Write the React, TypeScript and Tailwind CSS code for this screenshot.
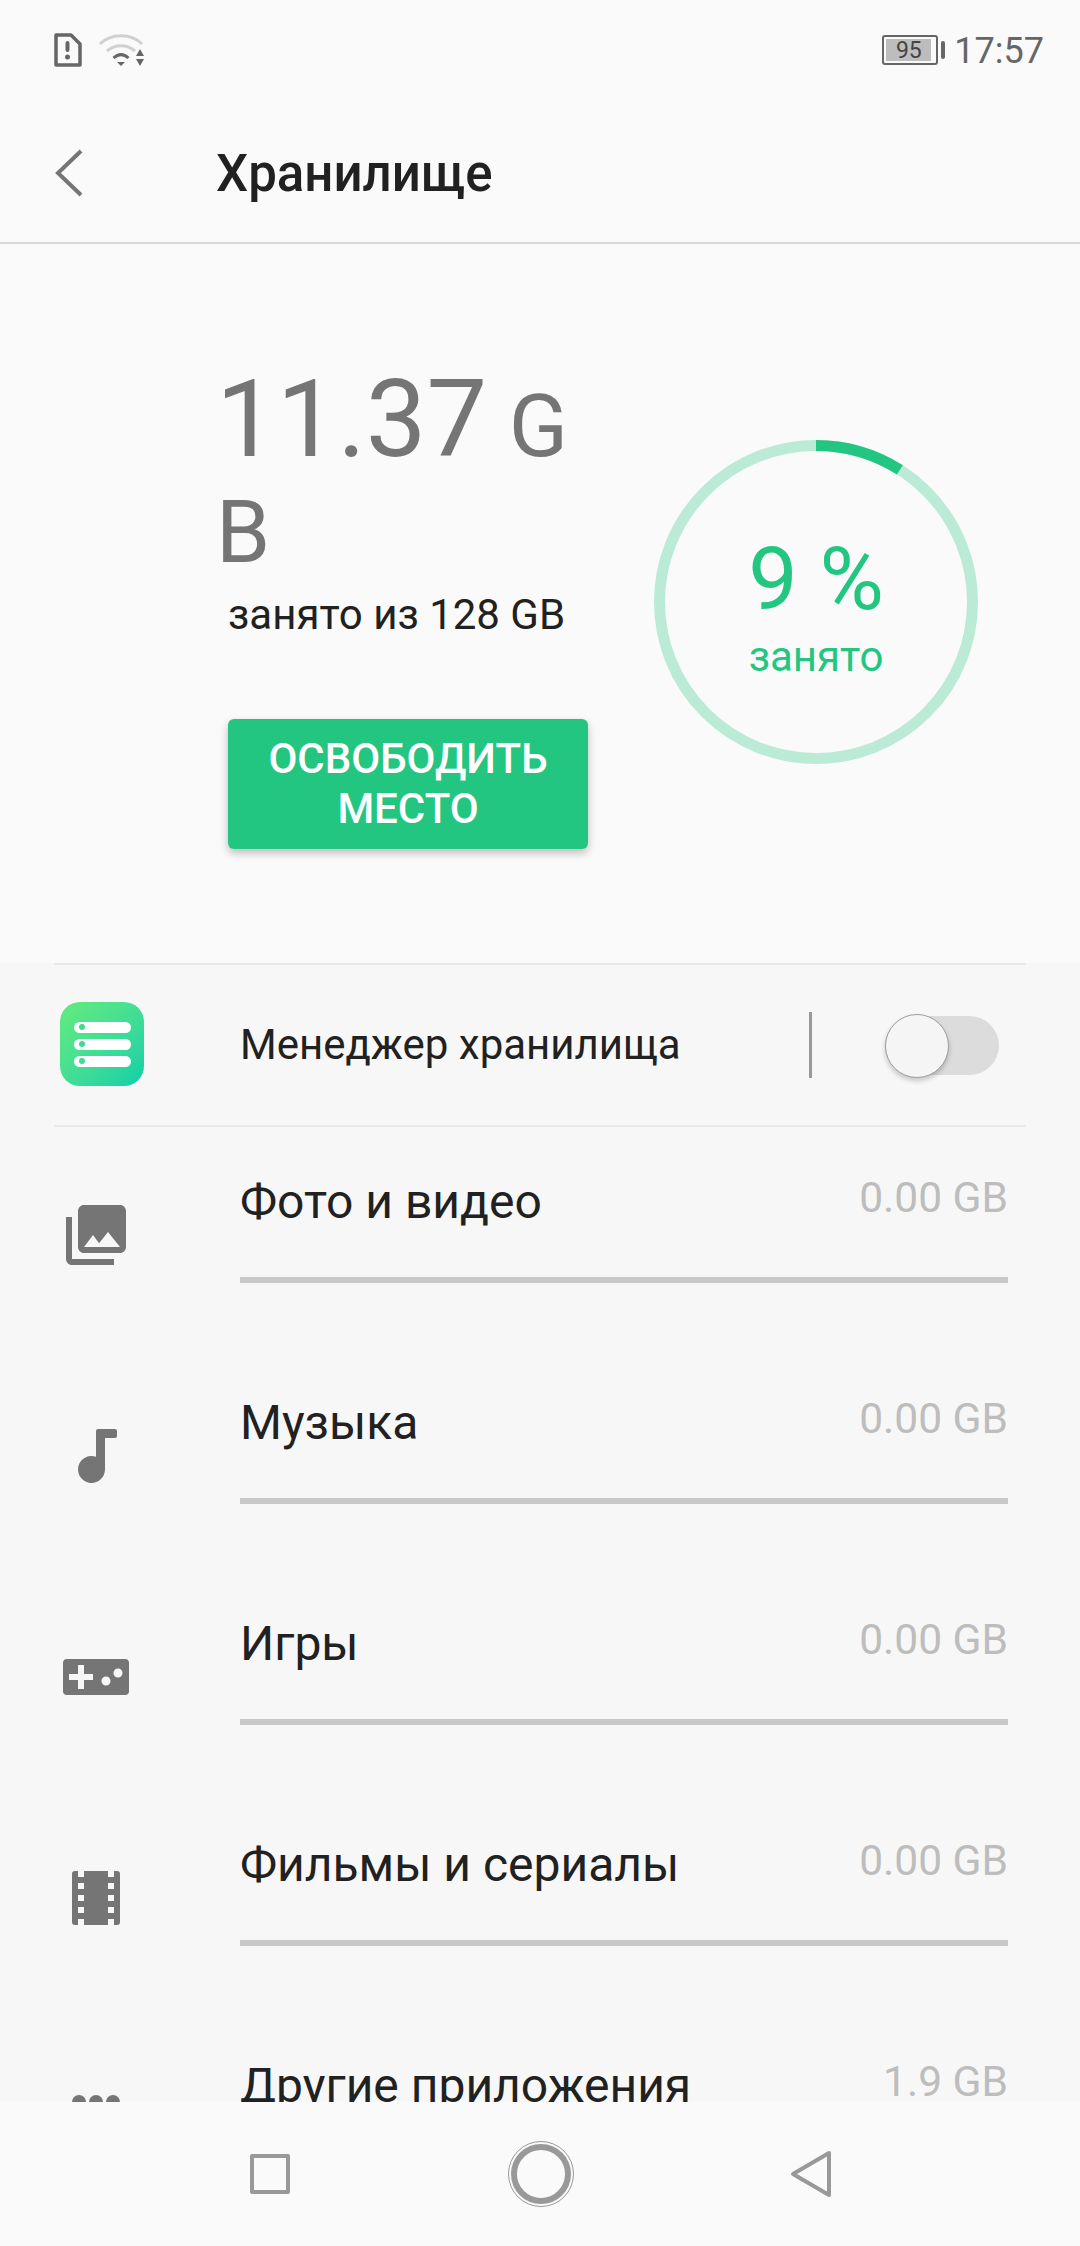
const rows = [
  { label: 'Фото и видео', size: '0.00 GB', icon: 'photo' },
  { label: 'Музыка', size: '0.00 GB', icon: 'music' },
  { label: 'Игры', size: '0.00 GB', icon: 'game' },
  { label: 'Фильмы и сериалы', size: '0.00 GB', icon: 'film' },
  { label: 'Другие приложения', size: '1.9 GB', icon: 'more' },
]

function RowIcon({ name }: { name: string }) {
  if (name === 'photo') {
    return (
      <svg viewBox="0 0 24 24" className="w-[72px] h-[72px]" fill="#757575">
        <path d="M22 16V4c0-1.1-.9-2-2-2H8c-1.1 0-2 .9-2 2v12c0 1.1.9 2 2 2h12c1.1 0 2-.9 2-2zm-11-4l2.03 2.71L16 11l4 5H8l3-4zM2 6v14c0 1.1.9 2 2 2h14v-2H4V6H2z" />
      </svg>
    )
  }
  if (name === 'music') {
    return (
      <svg viewBox="0 0 72 72" className="w-[72px] h-[72px]" fill="#757575">
        <path d="M36 11a2 2 0 0 1 2-2h17a2 2 0 0 1 2 2v5a2 2 0 0 1-2 2H45v31.500a13.500 13.500 0 1 1-9-12.730V11z" />
      </svg>
    )
  }
  if (name === 'game') {
    return (
      <svg viewBox="0 0 72 72" className="w-[72px] h-[72px]" fill="#757575">
        <path
          fillRule="evenodd"
          d="M7 18h58a4 4 0 0 1 4 4v28a4 4 0 0 1-4 4H7a4 4 0 0 1-4-4V22a4 4 0 0 1 4-4zm11 6v9H9v6h9v9h6v-9h9v-6h-9v-9h-6zm28 11.500a4.500 4.500 0 1 0 0 9 4.500 4.500 0 0 0 0-9zm12-8a4.500 4.500 0 1 0 0 9 4.500 4.500 0 0 0 0-9z"
        />
      </svg>
    )
  }
  if (name === 'film') {
    return (
      <svg viewBox="0 0 72 72" className="w-[72px] h-[72px]" fill="#757575">
        <path
          fillRule="evenodd"
          d="M15 9h3v6h6V9h24v6h6V9h3a3 3 0 0 1 3 3v48a3 3 0 0 1-3 3h-3v-6h-6v6H24v-6h-6v6h-3a3 3 0 0 1-3-3V12a3 3 0 0 1 3-3zm3 12v6h6v-6h-6zm0 12v6h6v-6h-6zm0 12v6h6v-6h-6zm30-24v6h6v-6h-6zm0 12v6h6v-6h-6zm0 12v6h6v-6h-6z"
        />
      </svg>
    )
  }
  return (
    <svg viewBox="0 0 72 72" className="w-[72px] h-[72px]" fill="#757575">
      <circle cx="19" cy="19" r="7" />
      <circle cx="36" cy="19" r="7" />
      <circle cx="53" cy="19" r="7" />
    </svg>
  )
}

function StatusBar() {
  return (
    <div className="h-[72px] shrink-0 flex items-center justify-between pl-[54px] pr-[36px] pt-[28px] text-[#666666]">
      <div className="flex items-center gap-[16px]">
        <svg viewBox="0 0 28 34" className="w-[28px] h-[34px]">
          <path d="M2 2h15l9 9v21H2z" fill="none" stroke="#666666" strokeWidth="3.500" strokeLinejoin="round" />
          <rect x="11.500" y="8" width="4" height="11" rx="2" fill="#666666" />
          <circle cx="13.500" cy="24" r="2.500" fill="#666666" />
        </svg>
        <svg viewBox="0 0 48 36" className="w-[48px] h-[36px]">
          <path d="M2 12C13 1 33 1 44 12" fill="none" stroke="#d0d0d0" strokeWidth="3" />
          <path d="M9 19c8-7 20-7 28 0" fill="none" stroke="#d0d0d0" strokeWidth="3" />
          <path d="M15.500 26c5-4.500 10-4.500 15 0" fill="none" stroke="#666666" strokeWidth="3" />
          <path d="M19 30h8l-4 4z" fill="#666666" />
          <path d="M42 17l4 7h-8zM38 27h8l-4 7z" fill="#666666" />
        </svg>
      </div>
      <div className="flex items-center gap-[9px]">
        <div className="flex items-center gap-[3px]">
          <div className="w-[56px] h-[30px] rounded-[3px] border-2 border-[#666666] p-[2px]">
            <div className="h-full w-[45px] bg-[#bdbdbd] flex items-center justify-center text-[23px] leading-none font-['Roboto',sans-serif] text-[#444444]">
              95
            </div>
          </div>
          <div className="w-[4px] h-[18px] rounded-[2px] bg-[#666666]" />
        </div>
        <span className="text-[36px] leading-none font-['Roboto',sans-serif] pt-[2px]">17:57</span>
      </div>
    </div>
  )
}

function Ring() {
  const r = 156.5
  const c = 2 * Math.PI * r
  return (
    <div className="relative w-[324px] h-[324px]">
      <svg viewBox="0 0 324 324" className="w-[324px] h-[324px]">
        <circle cx="162" cy="162" r={r} fill="none" stroke="#bbebd7" strokeWidth="11" />
        <circle
          cx="162"
          cy="162"
          r={r}
          fill="none"
          stroke="#23c680"
          strokeWidth="11"
          strokeDasharray={`${c * 0.09} ${c}`}
          transform="rotate(-90 162 162)"
        />
      </svg>
      <div className="absolute inset-0 flex flex-col items-center justify-center pt-[6px] text-[#23c680]">
        <span className="text-[88px] leading-[100px]">9 %</span>
        <span className="text-[42px] leading-[48px] mt-[4px]">занято</span>
      </div>
    </div>
  )
}

export default function App() {
  return (
    <div className="w-[1080px] h-[2246px] bg-[#fafafa] flex flex-col overflow-hidden font-['Roboto',sans-serif] text-[#212121]">
      <StatusBar />
      <div className="h-[172px] shrink-0 flex items-center pt-[32px] border-b-2 border-[#d8d8d8]">
        <svg viewBox="0 0 30 50" className="ml-[54px] w-[30px] h-[50px]">
          <path d="M27 3L4 25l23 22" fill="none" stroke="#757575" strokeWidth="4" />
        </svg>
        <h1 className="ml-[132px] text-[51px] font-medium leading-none">Хранилище</h1>
      </div>

      <div className="h-[719px] shrink-0 flex items-start pl-[216px]">
        <div className="w-[372px] pt-[122px] flex flex-col">
          <div className="w-[360px] text-[#757575] text-[87px] leading-[106px] break-all">
            <span className="text-[108px]">11.37</span> GB
          </div>
          <div className="ml-[12px] text-[42px] leading-[48px] mt-[6px] whitespace-nowrap">занято из 128 GB</div>
          <button className="ml-[12px] mt-[80px] w-[360px] h-[130px] rounded-[6px] bg-[#23c680] text-white text-[42px] leading-[50px] font-medium shadow-[0_4px_8px_rgba(0,0,0,0.25)]">
            ОСВОБОДИТЬ
            <br />
            МЕСТО
          </button>
        </div>
        <div className="ml-[66px] mt-[196px]">
          <Ring />
        </div>
      </div>

      <div className="flex-1 min-h-0 overflow-hidden bg-[#f7f7f7]">
        <div className="mx-[54px] h-[164px] flex items-center border-y-2 border-[#e8e8e8]">
          <div className="ml-[6px] mt-[-2px] w-[84px] h-[84px] rounded-[20px] bg-gradient-to-br from-[#63ec7c] to-[#04cfa8] flex flex-col items-center justify-center gap-[6px]">
            {[0, 1, 2].map((i) => (
              <div key={i} className="w-[57px] h-[11px] rounded-full bg-white flex items-center pl-[5px]">
                <div className="w-[6px] h-[6px] rounded-full bg-[#3fdc90]" />
              </div>
            ))}
          </div>
          <span className="ml-[96px] text-[42px] leading-none">Менеджер хранилища</span>
          <div className="ml-[128px] w-[3px] h-[66px] bg-[#999999]" />
          <div className="relative ml-[73px] w-[114px] h-[59px] rounded-full bg-[#dcdcdc]">
            <div className="absolute left-0 top-[-2px] w-[64px] h-[64px] rounded-full bg-[#f5f5f5] border border-[#9e9e9e] shadow-[0_3px_5px_rgba(0,0,0,0.2)]" />
          </div>
        </div>

        {rows.map((row) => (
          <div key={row.label} className="h-[221px] flex">
            <div className="w-[240px] pl-[60px] pt-[72px] shrink-0">
              <RowIcon name={row.icon} />
            </div>
            <div className="w-[768px] h-[156px] border-b-[6px] border-[#c8c8c8] pt-[51px] flex items-start justify-between">
              <span className="text-[48px] leading-[48px]">{row.label}</span>
              <span className="text-[42.5px] leading-[40px] text-[#bdbdbd]">{row.size}</span>
            </div>
          </div>
        ))}
      </div>

      <div className="h-[144px] shrink-0 bg-[#fafafa] flex items-center">
        <div className="ml-[250px] w-[40px] h-[40px] border-[4px] border-[#999999] rounded-[2px]" />
        <div className="ml-[218px] w-[66px] h-[66px] rounded-full border border-[#999999] p-[2px]">
          <div className="w-full h-full rounded-full border-[6px] border-[#999999]" />
        </div>
        <svg viewBox="0 0 44 48" className="ml-[215px] w-[44px] h-[48px]">
          <path d="M40 3v42L4 24z" fill="none" stroke="#999999" strokeWidth="4" strokeLinejoin="round" />
        </svg>
      </div>
    </div>
  )
}
